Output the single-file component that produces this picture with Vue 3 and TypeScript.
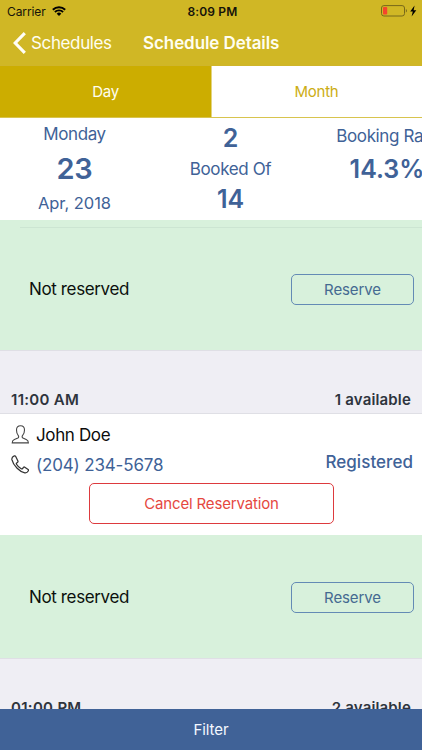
<script setup lang="ts">
import { ref } from 'vue'

type Tab = 'Day' | 'Month'
const tabs: Tab[] = ['Day', 'Month']
const active = ref<Tab>('Day')
</script>

<template>
  <div class="screen">
    <header class="top">
      <div class="status">
        <div class="carrier">
          <span>Carrier</span>
          <svg class="wifi" viewBox="0 0 14 10" width="14" height="10">
            <path d="M.8 3.700A8.900 8.900 0 0 1 13.200 3.700" />
            <path d="M2.900 6A5.900 5.900 0 0 1 11.100 6" />
            <path class="dot" d="M7 10 4.700 7.700A3.200 3.200 0 0 1 9.300 7.700Z" />
          </svg>
        </div>
        <b class="clock">8:09 PM</b>
        <div class="power">
          <svg width="36" height="12" viewBox="0 0 36 12">
            <rect class="shell" x=".5" y=".6" width="23" height="10.4" rx="2.4" />
            <rect class="charge" x="2" y="2.1" width="4.2" height="7.4" rx=".8" />
            <path class="cap" d="M24.9 4.1c1.4.5 1.4 2.9 0 3.4Z" />
            <path class="bolt" d="M33.600.6 29.200 6.500h2.600l-1.200 4.900 4.700-6.200h-2.700Z" />
          </svg>
        </div>
      </div>
      <nav class="nav">
        <button class="back">
          <svg width="13" height="22" viewBox="0 0 13 22"><path d="M11.800 1.200 2.200 11l9.600 9.800" /></svg>
          <span>Schedules</span>
        </button>
        <h1>Schedule Details</h1>
      </nav>
    </header>

    <div class="tabs">
      <button v-for="t in tabs" :key="t" :class="{ on: active === t }" @click="active = t">{{ t }}</button>
    </div>

    <section class="stats">
      <div class="stat date">
        <span>Monday</span>
        <strong>23</strong>
        <span class="month">Apr, 2018</span>
      </div>
      <div class="stat booked">
        <strong>2</strong>
        <span>Booked Of</span>
        <strong>14</strong>
      </div>
      <div class="stat rate">
        <span>Booking Rate</span>
        <strong>14.3%</strong>
      </div>
    </section>

    <main class="list">
      <div class="open first">
        <span>Not reserved</span>
        <button class="reserve">Reserve</button>
      </div>
      <div class="slot"><span class="time">11:00 AM</span><span>1 available</span></div>
      <article class="booking">
        <div class="info">
          <div class="person">
            <div class="line">
              <svg class="icon" width="18" height="19" viewBox="0 0 18 19">
                <path d="M9.600.7C7 .7 5.500 2.400 5.500 4.900c0 2.400.7 4.500 1.800 5.700.6.8.5 2-.4 2.400l-3.500 1.400C1.900 15 1.200 15.900 1.200 17.900h16.200c0-2-.7-2.900-2.200-3.500l-3.300-1.400c-.9-.4-1-1.600-.4-2.400 1.200-1.200 2-3.300 2-5.700C13.500 2.400 12.200.7 9.600.7Z" />
              </svg>
              <span class="name">John Doe</span>
            </div>
            <div class="line">
              <svg class="icon call" width="18" height="19" viewBox="0 0 18 19">
                <path d="M3.300.9C1.600 1.600.6 2.900.9 4.700c.7 3.100 2.700 6.100 5.200 8.600 2.300 2.300 5.100 4.100 7.700 4.600 1.600.3 2.800-.7 3.600-2.100.3-.5.2-1-.3-1.400l-3.300-2.200c-.5-.3-1-.2-1.300.2l-.9 1.100c-.4.5-.9.5-1.400.2C8 12.400 6.500 10.900 5.500 9.200c-.3-.5-.2-1 .2-1.300l.9-.7c.5-.4.5-.8.3-1.300L4.700 1.500C4.400.9 3.900.7 3.300.9Z" />
              </svg>
              <span class="phone">(204) 234-5678</span>
            </div>
          </div>
          <span class="state">Registered</span>
        </div>
        <button class="cancel">Cancel Reservation</button>
      </article>
      <div class="open second">
        <span>Not reserved</span>
        <button class="reserve">Reserve</button>
      </div>
      <div class="slot last"><span class="time">01:00 PM</span><span>2 available</span></div>
    </main>

    <button class="filter">Filter</button>
  </div>
</template>

<style>
body {
  overflow: hidden;
}
</style>

<style scoped>
.screen {
  width: 422px;
  height: 750px;
  display: flex;
  flex-direction: column;
  overflow: hidden;
  background: #fff;
  color: #406297;
  font-family: Inter, 'Liberation Sans', sans-serif;
  font-size: 17px;
  letter-spacing: -0.37px;
  white-space: nowrap;
}
button {
  font: inherit;
  letter-spacing: inherit;
  color: inherit;
  background: none;
  border: 0;
  padding: 0;
  margin: 0;
}
.top {
  flex: none;
  height: 65px;
  background: #d0b725;
}
.status {
  display: grid;
  grid-template-columns: 1fr auto 1fr;
  align-items: center;
  height: 22px;
  padding: 0 5px 0 7px;
  color: #15130a;
  font-size: 12px;
  letter-spacing: -0.1px;
}
.carrier {
  display: flex;
  align-items: center;
  gap: 6px;
}
.wifi {
  fill: none;
  stroke: #000;
  stroke-width: 1.9;
}
.wifi .dot {
  fill: #000;
  stroke: none;
}
.clock {
  padding-left: 1px;
  font-weight: 600;
  letter-spacing: 0.15px;
}
.power {
  display: flex;
  justify-content: flex-end;
}
.shell {
  fill: none;
  stroke: #77681a;
}
.charge {
  fill: #f5452c;
}
.cap {
  fill: #77681a;
}
.bolt {
  fill: #000;
}
.nav {
  display: flex;
  align-items: center;
  height: 42px;
  padding-left: 13px;
  color: #fffef0;
}
.back {
  display: flex;
  align-items: center;
  gap: 5px;
  width: 130px;
}
.back svg {
  fill: none;
  stroke: #fffef5;
  stroke-width: 3.1;
}
h1 {
  margin: 0;
  font-size: 17px;
  font-weight: 600;
  letter-spacing: -0.08px;
}
.tabs {
  flex: none;
  display: grid;
  grid-template-columns: 211px 211px;
  height: 53px;
  box-sizing: border-box;
  border: 1px solid #cfb52a;
  border-bottom-color: #d8c44e;
  border-width: 1px 0;
  font-size: 15px;
  letter-spacing: -0.25px;
  color: #ccad14;
}
.tabs .on {
  background: #ccad00;
  color: #fffef0;
  box-shadow: 1px 0 0 #e3d47f;
}
.stats {
  flex: none;
  height: 102px;
  display: grid;
  grid-template-columns: 149px 163px 150px;
  overflow: hidden;
}
.stat {
  display: flex;
  flex-direction: column;
  align-items: center;
}
.stat strong {
  font-weight: 600;
  font-size: 25px;
  letter-spacing: 0;
  line-height: 30px;
}
.stat span {
  line-height: 20px;
}
.date {
  padding-top: 6px;
}
.date strong {
  font-size: 29px;
  letter-spacing: -0.3px;
  line-height: 49px;
}
.date .month {
  font-size: 16.5px;
  letter-spacing: -0.05px;
}
.booked {
  padding-top: 5px;
}
.booked span {
  margin: 6px 0 5px;
}
.rate {
  padding-top: 8px;
}
.rate strong {
  margin-top: 8px;
}
.list {
  flex: 1;
  min-height: 0;
  overflow: hidden;
}
.open {
  display: flex;
  align-items: center;
  justify-content: space-between;
  padding: 1px 8px 0 29px;
  box-sizing: border-box;
  background: #d8f1dc;
  color: #0b100c;
}
.first {
  height: 130px;
  padding-top: 8px;
  background: linear-gradient(#cce5d2, #cce5d2) 20px 7px / 402px 1px no-repeat #d8f1dc;
}
.second {
  height: 123px;
}
.reserve {
  width: 123px;
  height: 31px;
  border: 1px solid #648bb5;
  border-radius: 5px;
  color: #456a91;
  font-size: 15px;
  letter-spacing: -0.1px;
}
.slot {
  height: 64px;
  box-sizing: border-box;
  display: flex;
  justify-content: space-between;
  padding: 40px 11px 0;
  border: 1px solid #dfdfe5;
  border-width: 1px 0;
  background: #efeef4;
  color: #2e343d;
  font-size: 15px;
  font-weight: 600;
  line-height: 18px;
  letter-spacing: 0.16px;
}
.time {
  letter-spacing: 0.3px;
}
.booking {
  height: 121px;
  background: #fff;
  display: flex;
  flex-direction: column;
}
.info {
  display: flex;
  justify-content: space-between;
  padding: 6px 9px 0 11px;
}
.line {
  display: flex;
  align-items: center;
  gap: 7px;
  height: 30px;
}
.icon {
  margin-bottom: 2px;
  fill: none;
  stroke: #454545;
  stroke-width: 1.1;
}
.call {
  stroke: #333;
  stroke-width: 1.25;
}
.name {
  color: #0c0c0c;
}
.phone {
  letter-spacing: -0.17px;
}
.state {
  padding-top: 31px;
  font-weight: 500;
  line-height: 22px;
  letter-spacing: 0.05px;
}
.cancel {
  width: 245px;
  height: 41px;
  margin: 3px 0 0 89px;
  border: 1px solid #dd3a3e;
  border-radius: 5px;
  color: #e5483f;
  font-size: 15px;
  letter-spacing: -0.16px;
}
.filter {
  flex: none;
  height: 41px;
  background: #406297;
  color: #f4f8ff;
  font-size: 15px;
  letter-spacing: -0.1px;
}
</style>
